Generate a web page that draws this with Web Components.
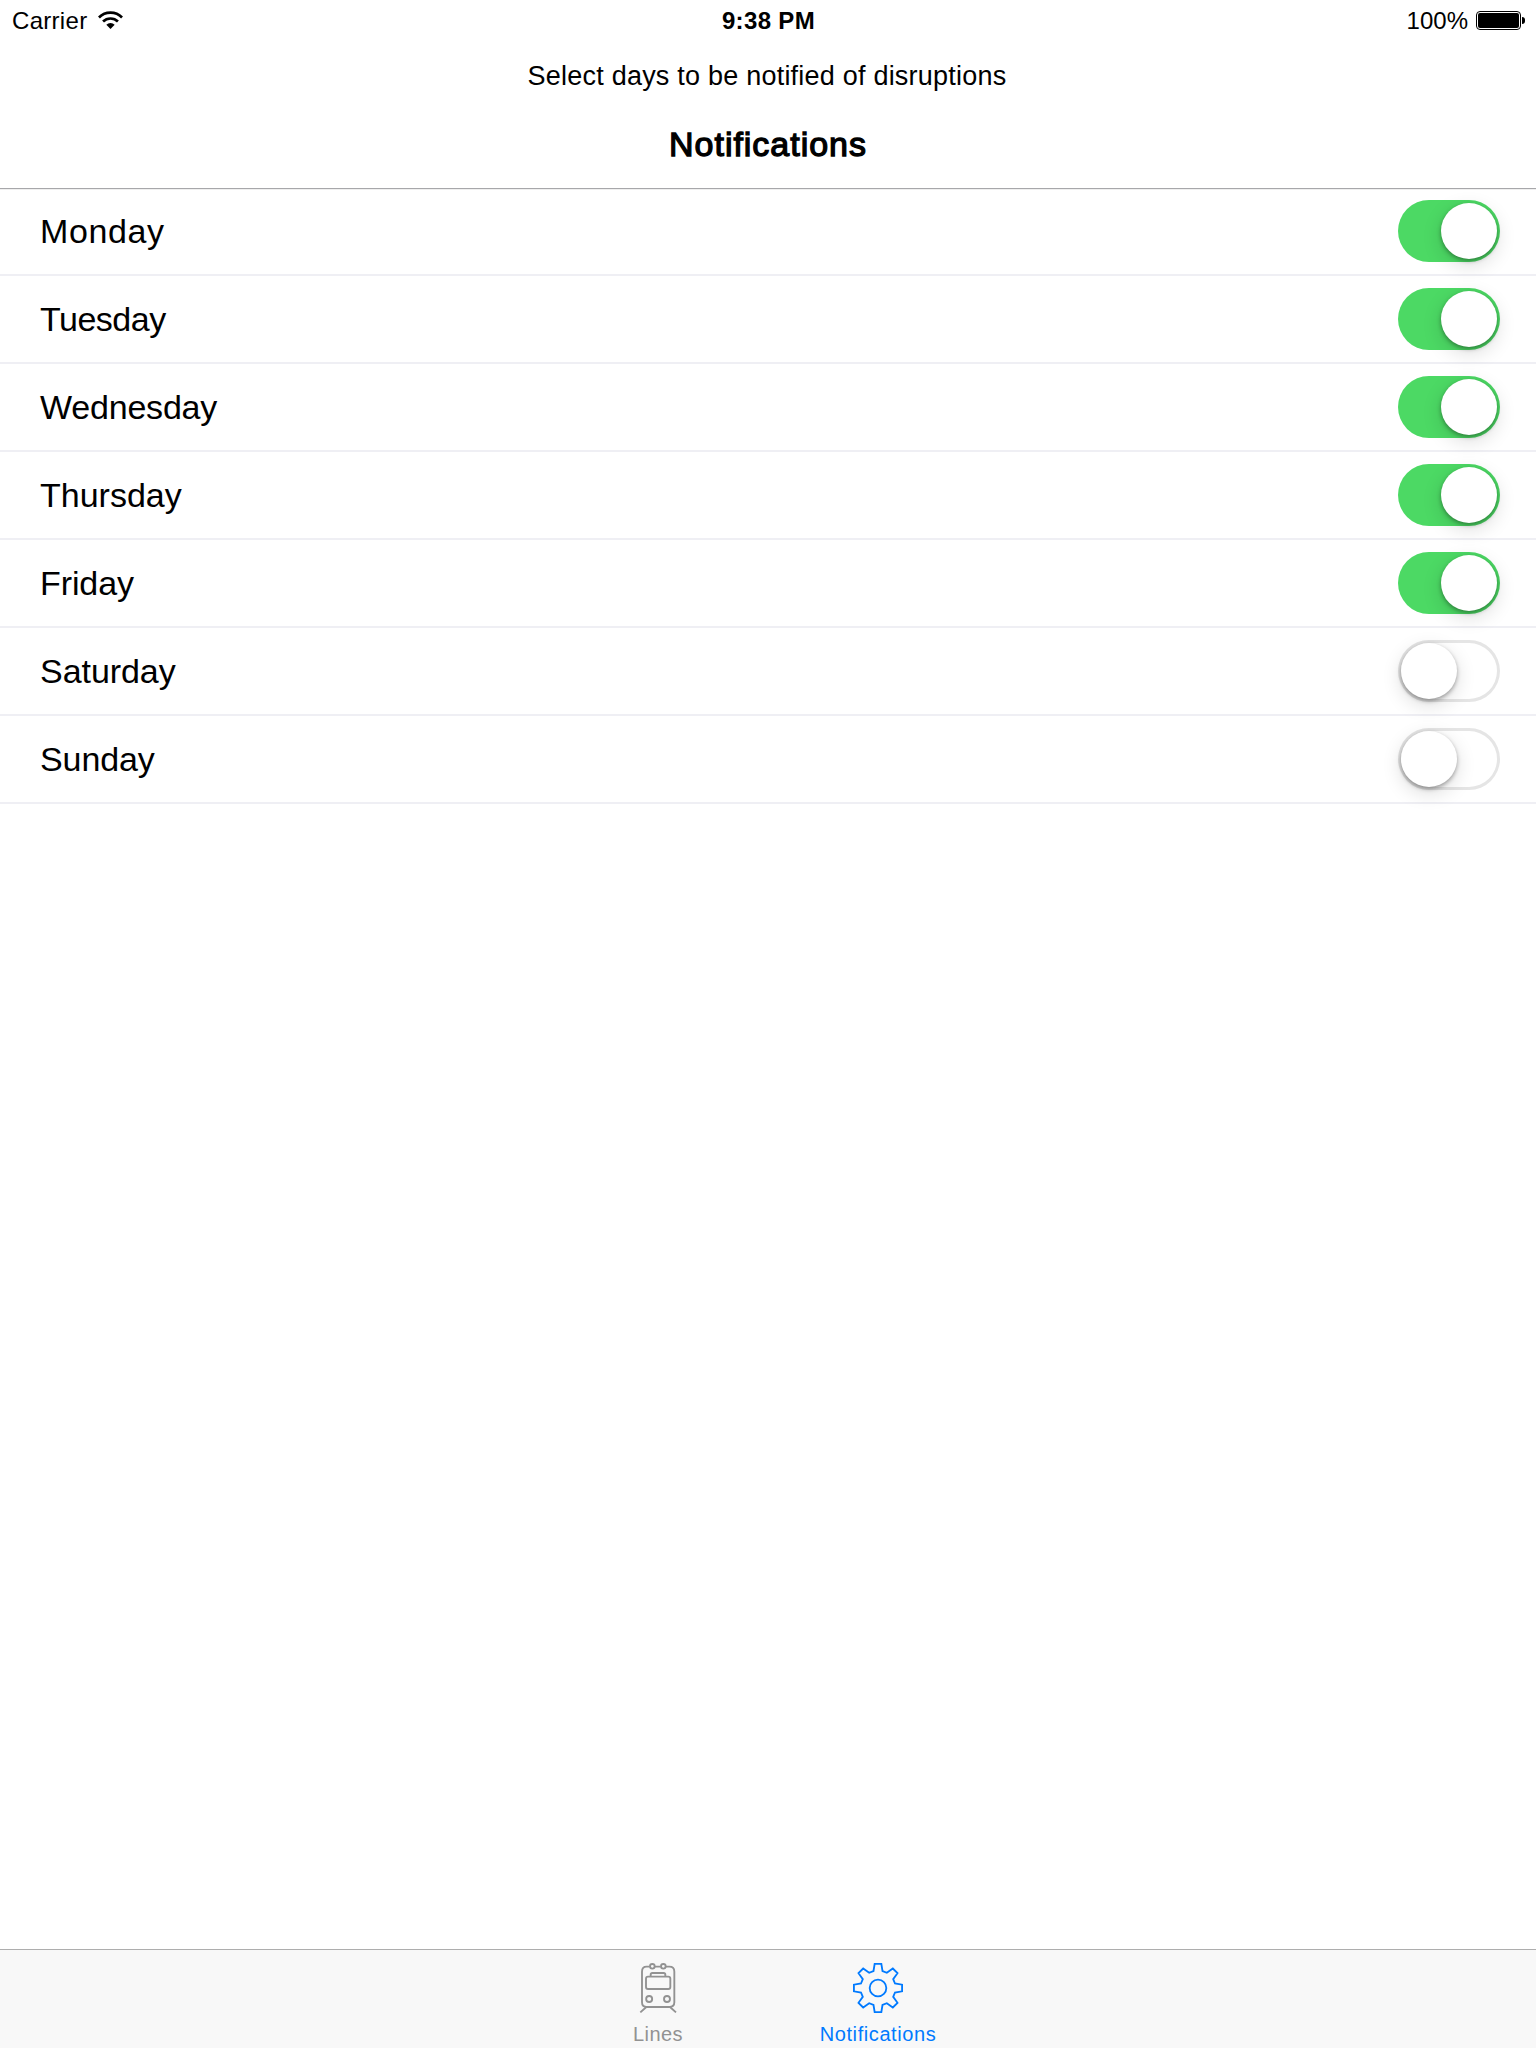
<!DOCTYPE html>
<html lang="en">
<head>
<meta charset="utf-8">
<title>Notifications</title>
<style>
  html, body { margin: 0; background: #fff; }
  body { font-family: "Liberation Sans", Arial, sans-serif; color: #000; font-feature-settings: "liga" 1; }
</style>
</head>
<body>
<notification-settings></notification-settings>
<script>
const define = (name, html, init) => {
  const template = document.createElement('template');
  template.innerHTML = html;
  customElements.define(name, class extends HTMLElement {
    connectedCallback() {
      if (this.shadowRoot) return;
      this.attachShadow({ mode: 'open' }).append(template.content.cloneNode(true));
      if (init) init(this, this.shadowRoot);
    }
  });
};

define('wifi-icon', `
  <style>:host { display: block; width: 25px; height: 18px; } svg { display: block; }</style>
  <svg width="25" height="18" viewBox="294.5 32 75 54">
    <g fill="none" stroke="#000" stroke-width="8">
      <path d="M297.4 51.4A49 49 0 0 1 366.6 51.4"/>
      <path d="M309.7 63.7A31.5 31.5 0 0 1 354.3 63.7"/>
    </g>
    <path d="M332 86L319.5 73.5A17.7 17.7 0 0 1 344.5 73.5Z"/>
  </svg>`);

define('battery-icon', `
  <style>
    :host { display: flex; align-items: center; gap: 1px; }
    .case { box-sizing: border-box; width: 45px; height: 19px; padding: 1px; border: 1px solid #000; border-radius: 4px; }
    .level { height: 15px; border-radius: 2px; background: #000; }
    .cap { width: 3px; height: 7px; border-radius: 0 3px 3px 0; background: #000; }
  </style>
  <div class="case"><div class="level"></div></div><div class="cap"></div>`);

define('status-bar', `
  <style>
    :host { display: grid; grid-template-columns: 1fr auto 1fr; height: 41px; line-height: 41px; font-size: 24px; padding: 0 11px 0 12px; }
    .left, .right { display: flex; }
    .carrier { letter-spacing: .3px; }
    .right { justify-content: flex-end; }
    .time { font-weight: bold; letter-spacing: .35px; }
    wifi-icon { margin: 11px 0 0 11px; }
    battery-icon { height: 19px; margin: 11px 0 0 8px; }
  </style>
  <div class="left"><span class="carrier">Carrier</span><wifi-icon></wifi-icon></div>
  <div class="time">9:38 PM</div>
  <div class="right"><span>100%</span><battery-icon></battery-icon></div>`);

define('nav-header', `
  <style>
    :host { display: flex; flex-direction: column; box-sizing: border-box; height: 189px; text-align: center;
            border-bottom: 1px solid #a7a7aa; box-shadow: 0 1px #efefef; position: relative; z-index: 1; }
    .prompt { font-size: 27px; line-height: 70px; letter-spacing: .22px; padding-right: 2px; }
    .title { font-size: 34px; line-height: 66px; letter-spacing: .98px; -webkit-text-stroke: 1.3px #000; }
  </style>
  <status-bar></status-bar>
  <div class="prompt"><slot name="prompt"></slot></div>
  <div class="title"><slot></slot></div>`);

define('toggle-switch', `
  <style>
    :host { display: flex; box-sizing: border-box; width: 102px; height: 62px; padding: 3px; border-radius: 31px;
            box-shadow: inset 0 0 0 3px #e5e5e5; background: #fff; }
    :host([on]) { justify-content: flex-end; background: #4cd964; box-shadow: none; }
    i { width: 56px; height: 56px; border-radius: 50%; background: #fff;
        box-shadow: 0 2px 4px rgba(0,0,0,.34), 0 6px 20px rgba(0,0,0,.14); }
  </style>
  <i></i>`);

define('day-row', `
  <style>
    :host { display: flex; align-items: center; justify-content: space-between; box-sizing: border-box; height: 88px;
            padding: 0 36px 0 40px; border-bottom: 2px solid #efeff4; font-size: 34px; line-height: 86px; }
  </style>
  <span><slot></slot></span><toggle-switch></toggle-switch>`,
  (host, root) => {
    root.querySelector('span').style.letterSpacing = (host.getAttribute('tracking') || 0) + 'px';
    root.querySelector('toggle-switch').toggleAttribute('on', host.hasAttribute('on'));
  });

define('tab-item', `
  <style>
    :host { display: flex; flex-direction: column; align-items: center; width: 152px; color: #929292; font-size: 20px; line-height: 26px; }
    :host([selected]) { color: #007aff; }
    span { margin-top: 8px; letter-spacing: var(--tracking, .4px); }
  </style>
  <slot name="icon"></slot><span><slot></slot></span>`);

define('train-icon', `
  <style>:host, svg { display: block; width: 50px; height: 50px; }</style>
  <svg viewBox="39 69 150 150" fill="none" stroke="currentColor" stroke-width="5.6">
    <path d="M89 80H80Q66 80 66 95V187Q66 201 80 201H148Q163 201 163 187V95Q163 80 148 80H138M105 80H122"/>
    <circle cx="97" cy="79" r="7"/><circle cx="130" cy="79" r="7"/>
    <path d="M92 110V104Q92 99 97 99H131Q136 99 136 104V110"/>
    <rect x="78" y="110" width="73" height="37" rx="6"/>
    <circle cx="87.500" cy="177" r="9"/><circle cx="141" cy="177" r="9"/>
    <path d="M79 201L61 217M150 201L168 217"/>
  </svg>`);

define('gear-icon', `
  <style>:host, svg { display: block; width: 50px; height: 50px; }</style>
  <svg viewBox="-75 -75 150 150" fill="none" stroke="currentColor" stroke-width="5.5">
    <path d="M-13.500 -51L-10 -72.250H10L13.500 -51L26.500 -45.600L44.500 -58.500L58.500 -44.500L45.600 -26.500L51 -13.500L72.250 -10V10L51 13.500L45.600 26.500L58.500 44.500L44.500 58.500L26.500 45.600L13.500 51L10 72.250H-10L-13.500 51L-26.500 45.600L-44.500 58.500L-58.500 44.500L-45.600 26.500L-51 13.500L-72.250 10V-10L-51 -13.500L-45.600 -26.500L-58.500 -44.500L-44.500 -58.500L-26.500 -45.600Z"/>
    <circle r="25"/>
  </svg>`);

define('tab-bar', `
  <style>
    :host { display: flex; justify-content: center; gap: 68px; box-sizing: border-box; height: 99px; padding-top: 13px;
            border-top: 1px solid #adadad; background: #f8f8f8; }
  </style>
  <slot></slot>`);

define('notification-settings', `
  <style>
    :host { display: flex; flex-direction: column; width: 1536px; height: 2048px; background: #fff; overflow: hidden; }
    main { flex: 1; margin-top: -1px; }
  </style>
  <nav-header><span slot="prompt">Select days to be notified of disruptions</span>Notifications</nav-header>
  <main>
    <day-row on tracking=".6">Monday</day-row>
    <day-row on tracking="-.5">Tuesday</day-row>
    <day-row on tracking="-.2">Wednesday</day-row>
    <day-row on tracking="0">Thursday</day-row>
    <day-row on tracking="-.1">Friday</day-row>
    <day-row tracking="-.05">Saturday</day-row>
    <day-row tracking="-.1">Sunday</day-row>
  </main>
  <tab-bar>
    <tab-item><train-icon slot="icon"></train-icon>Lines</tab-item>
    <tab-item selected style="--tracking:.58px"><gear-icon slot="icon"></gear-icon>Notifications</tab-item>
  </tab-bar>`);
</script>
</body>
</html>
